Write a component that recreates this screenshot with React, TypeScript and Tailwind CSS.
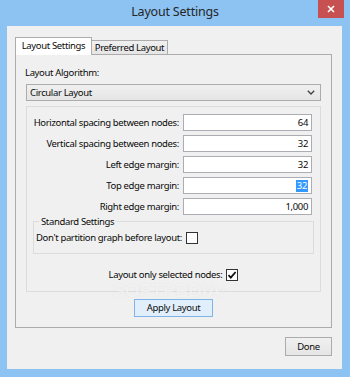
import React from "react";

const rows: { label: string; value: string; selected?: boolean }[] = [
  { label: "Horizontal spacing between nodes:", value: "64" },
  { label: "Vertical spacing between nodes:", value: "32" },
  { label: "Left edge margin:", value: "32" },
  { label: "Top edge margin:", value: "32", selected: true },
  { label: "Right edge margin:", value: "1,000" },
];

function CheckBox({ checked }: { checked?: boolean }) {
  return (
    <div className="w-[12px] h-[12px] shrink-0 border border-[#333333] bg-white flex items-center justify-center">
      {checked && (
        <svg width="10" height="10" viewBox="0 0 10 10">
          <path d="M1.5 5.2 L3.8 7.6 L8.6 2" fill="none" stroke="#111" strokeWidth="1.8" />
        </svg>
      )}
    </div>
  );
}

export default function App() {
  return (
    <div className="relative w-[350px] h-[377px] bg-[#8cc3f3] flex flex-col font-['Noto_Sans','Open_Sans',sans-serif] text-[9.5px] tracking-[-0.35px] text-[#0a0a0a] whitespace-nowrap overflow-hidden">
      {/* Title bar */}
      <div className="relative h-[26px] flex items-center justify-center">
        <span className="text-[12.5px] tracking-[-0.2px] text-[#262626] leading-none -mt-[1px]">Layout Settings</span>
        <div className="absolute top-0 right-[6px] w-[26px] h-[18px] bg-[#c75050] flex items-center justify-center">
          <svg width="8" height="8" viewBox="0 0 8 8">
            <path d="M1 1 L7 7 M7 1 L1 7" stroke="#fff" strokeWidth="1.6" />
          </svg>
        </div>
      </div>

      {/* Client area */}
      <div className="ml-[7px] w-[335px] h-[343px] bg-[#f0f0f0] flex flex-col pl-[8px] pr-[10px] pt-[11px]">
        {/* Tab headers */}
        <div className="relative z-10 flex items-end h-[17px]">
          <div className="w-[77px] h-[18px] -mb-[1px] bg-white border border-b-0 border-[#acacac] flex items-center justify-center leading-none pb-[1px]">
            Layout Settings
          </div>
          <div className="w-[76px] h-[14px] bg-gradient-to-b from-[#f0f0f0] to-[#e5e5e5] border border-l-0 border-b-0 border-[#acacac] flex items-center justify-center leading-none">
            Preferred Layout
          </div>
        </div>

        {/* Tab panel */}
        <div className="w-[317px] h-[274px] border border-[#acacac] bg-[#f0f0f0] flex flex-col px-[10px]">
          <div className="mt-[10px] h-[15px] leading-[15px] -ml-[1px]">Layout Algorithm:</div>
          <div className="mt-[4px] h-[17px] w-full border border-[#acacac] bg-gradient-to-b from-[#f0f0f0] to-[#e5e5e5] flex items-center justify-between pl-[3px] pr-[5px]">
            <span className="leading-none">Circular Layout</span>
            <svg width="8" height="5" viewBox="0 0 8 5">
              <path d="M0.8 0.8 L4 4 L7.2 0.8" fill="none" stroke="#404040" strokeWidth="1.3" />
            </svg>
          </div>

          {/* Group box */}
          <div className="mt-[5px] h-[186px] border border-[#dcdcdc] flex flex-col px-[6px]">
            <div className="pt-[7px] pr-[2px] flex flex-col gap-[4px]">
              {rows.map((r) => (
                <div key={r.label} className="flex items-center justify-end h-[17px]">
                  <span className="leading-none">{r.label}</span>
                  <div className="ml-[4px] w-[129px] h-[17px] shrink-0 border border-[#abadb3] bg-white flex items-center justify-end pr-[3px]">
                    {r.selected ? (
                      <span className="bg-[#3399ff] text-white leading-[12px] px-[1px]">{r.value}</span>
                    ) : (
                      <span className="leading-none">{r.value}</span>
                    )}
                  </div>
                </div>
              ))}
            </div>

            <fieldset className="mt-0 border border-[#dcdcdc] px-[2px] pb-[8px]">
              <legend className="ml-[3px] px-[2px] leading-[13px]">Standard Settings</legend>
              <div className="mt-[3px] h-[14px] flex items-center gap-[4px]">
                <span className="leading-none">Don't partition graph before layout:</span>
                <CheckBox />
              </div>
            </fieldset>

            <div className="mt-[14px] h-[14px] flex items-center justify-center gap-[4px]">
              <span className="leading-none">Layout only selected nodes:</span>
              <CheckBox checked />
            </div>
          </div>

          <div className="mt-[7px] self-center w-[79px] h-[18px] border border-[#7eb4ea] bg-[#e1effc] flex items-center justify-center leading-none">
            Apply Layout
          </div>
        </div>

        <div className="mt-[9px] self-end w-[47px] h-[19px] border border-[#acacac] bg-gradient-to-b from-[#f0f0f0] to-[#e5e5e5] flex items-center justify-center leading-none">
          Done
        </div>
      </div>

      {/* Watermark */}
      <div className="absolute left-[112px] top-[284px] pointer-events-none font-['Liberation_Sans',sans-serif] font-bold text-[19px] tracking-normal leading-[14px] text-white/60 [text-shadow:0_0_1px_rgba(180,180,180,0.35)]">
        SOFTPEDIA<span className="text-[7px] align-top">®</span>
      </div>
    </div>
  );
}
